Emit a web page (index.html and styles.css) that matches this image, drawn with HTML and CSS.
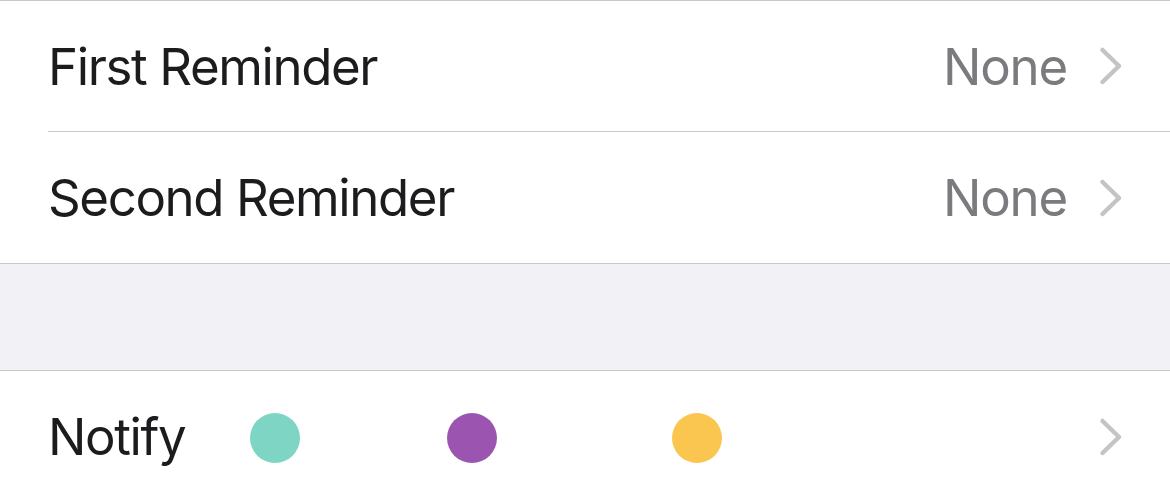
FILE: index.html
```html
<!DOCTYPE html>
<html lang="en">

<head>
    <meta charset="UTF-8">
    <meta name="viewport" content="width=device-width, initial-scale=1.0">
    <title>Reminders</title>
    <link rel="stylesheet" href="styles.css">
</head>

<body>
    <div class="group">
        <div class="row">
            <span class="label">First Reminder</span>
            <span class="value">None</span>
            <svg class="chevron" viewBox="0 0 24 40"><path d="M3.5 4 L20 20 L3.5 36"/></svg>
        </div>
        <div class="row">
            <span class="label">Second Reminder</span>
            <span class="value">None</span>
            <svg class="chevron" viewBox="0 0 24 40"><path d="M3.5 4 L20 20 L3.5 36"/></svg>
        </div>
    </div>

    <div class="spacer"></div>

    <div class="group">
        <div class="row">
            <span class="label short">Notify</span>
            <div class="dots">
                <span class="dot teal"></span>
                <span class="dot purple"></span>
                <span class="dot yellow"></span>
            </div>
            <svg class="chevron" viewBox="0 0 24 40"><path d="M3.5 4 L20 20 L3.5 36"/></svg>
        </div>
    </div>
</body>
</html>
```

FILE: styles.css
```css
body {
    margin: 0;
    background-color: #ffffff;
    font-family: 'Inter', 'Roboto', sans-serif;
    color: #1c1c1e;
}

.group {
    background-color: #ffffff;
    border-top: 1px solid #c8c7cc;
    border-bottom: 1px solid #c8c7cc;
}

.row {
    display: flex;
    align-items: center;
    height: 130px;
    margin-left: 48px;
    padding-right: 47px;
    border-bottom: 1px solid #c8c7cc;
}

.row:last-child {
    height: 131px;
    border-bottom: none;
}

.label {
    font-size: 51px;
    letter-spacing: -1.4px;
    flex: 1;
}

.label.short {
    flex: none;
    width: 202px;
}

.value {
    font-size: 51px;
    letter-spacing: -1.2px;
    color: #7b7a7e;
    margin-right: 32px;
}

.chevron {
    width: 24px;
    height: 40px;
    fill: none;
    stroke: #c4c4c7;
    stroke-width: 4.5;
    stroke-linecap: round;
    stroke-linejoin: round;
}

.spacer {
    height: 106px;
    background-color: #f2f1f6;
}

.dots {
    display: flex;
    flex: 1;
    margin-top: 2px;
}

.dot {
    width: 50px;
    height: 50px;
    border-radius: 50%;
}

.teal {
    background-color: #7fd5c3;
}

.purple {
    background-color: #9b55b1;
    margin-left: 147px;
}

.yellow {
    background-color: #fbc64f;
    margin-left: 175px;
}
```
